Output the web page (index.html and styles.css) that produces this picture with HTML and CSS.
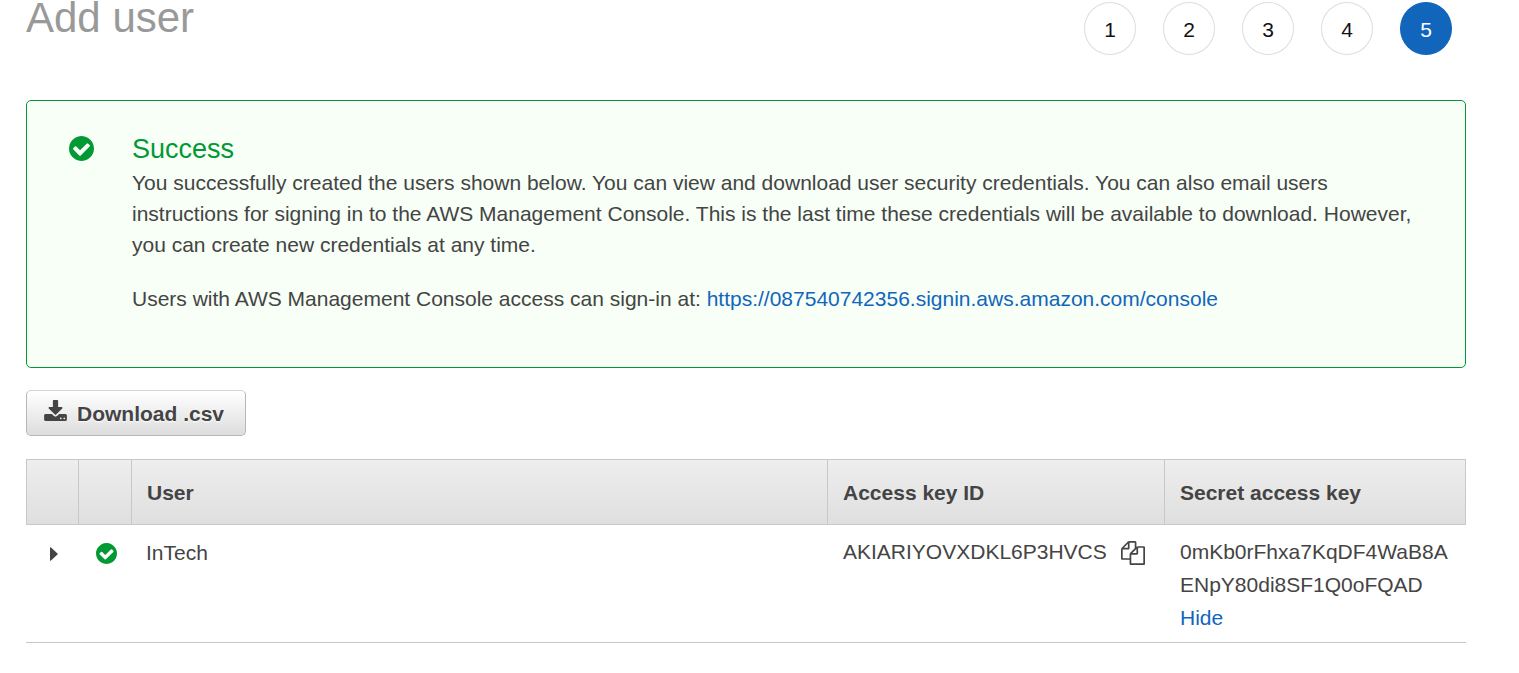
FILE: index.html
```html
<!DOCTYPE html>
<html lang="en">
<head>
<meta charset="utf-8">
<title>Add user</title>
<link rel="stylesheet" href="styles.css">
</head>
<body>
<svg class="sprite" aria-hidden="true">
  <symbol id="check" viewBox="128 128 1536 1536"><path d="M1412 734q0-28-18-46l-91-90q-19-19-45-19t-45 19l-408 407-226-226q-19-19-45-19t-45 19l-91 90q-18 18-18 46 0 27 18 45l362 362q19 19 45 19 27 0 46-19l543-543q18-18 18-45zm252 162q0 209-103 385.500t-279.500 279.500-385.500 103-385.500-103-279.500-279.500-103-385.500 103-385.500 279.500-279.500 385.500-103 385.500 103 279.500 279.500 103 385.500z"/></symbol>
</svg>
<main class="page">
  <header class="head">
    <h1 class="title">Add user</h1>
    <ol class="steps">
      <li class="step">1</li>
      <li class="step">2</li>
      <li class="step">3</li>
      <li class="step">4</li>
      <li class="step step-current" aria-current="step">5</li>
    </ol>
  </header>

  <section class="alert">
    <svg class="alert-icon" aria-hidden="true"><use href="#check"/></svg>
    <div class="alert-body">
      <h2 class="alert-title">Success</h2>
      <p class="alert-text">You successfully created the users shown below. You can view and download user security credentials. You can also email users instructions for signing in to the AWS Management Console. This is the last time these credentials will be available to download. However, you can create new credentials at any time.</p>
      <p class="alert-text">Users with AWS Management Console access can sign-in at: <a class="link" href="https://087540742356.signin.aws.amazon.com/console">https://087540742356.signin.aws.amazon.com/console</a></p>
    </div>
  </section>

  <button class="download" type="button">
    <svg class="download-icon" viewBox="64 0 1664 1536" aria-hidden="true"><path d="M1344 1344q0-26-19-45t-45-19-45 19-19 45 19 45 45 19 45-19 19-45zm256 0q0-26-19-45t-45-19-45 19-19 45 19 45 45 19 45-19 19-45zm128-224v320q0 40-28 68t-68 28h-1472q-40 0-68-28t-28-68v-320q0-40 28-68t68-28h465l135 136q58 56 136 56t136-56l136-136h464q40 0 68 28t28 68zm-325-569q17 41-14 70l-448 448q-18 19-45 19t-45-19l-448-448q-31-29-14-70 17-39 59-39h256v-448q0-26 19-45t45-19h256q26 0 45 19t19 45v448h256q42 0 59 39z"/></svg>
    <span>Download .csv</span>
  </button>

  <table class="users">
    <colgroup><col class="col-toggle"><col class="col-status"><col><col class="col-key"><col class="col-secret"></colgroup>
    <thead>
      <tr><th></th><th></th><th>User</th><th>Access key ID</th><th>Secret access key</th></tr>
    </thead>
    <tbody>
      <tr>
        <td class="center"><button class="icon-button" type="button" aria-label="Expand InTech"><svg class="caret" viewBox="0 0 8 14"><path d="M0 0.500Q0 0 1 0.500L7.500 6.500Q8 7 7.500 7.500L1 13.500Q0 14 0 13.500z"/></svg></button></td>
        <td class="center"><svg class="status-icon" role="img" aria-label="Created"><use href="#check"/></svg></td>
        <td class="name">InTech</td>
        <td><div class="key"><span>AKIARIYOVXDKL6P3HVCS</span><button class="icon-button" type="button" aria-label="Copy access key ID"><svg class="copy-icon" viewBox="0 0 1792 1792"><path d="M1696 384q40 0 68 28t28 68v1216q0 40-28 68t-68 28h-960q-40 0-68-28t-28-68v-288h-544q-40 0-68-28t-28-68v-672q0-40 20-88t48-76l408-408q28-28 76-48t88-20h416q40 0 68 28t28 68v328q68-40 128-40h416zm-544 213l-299 299h299v-299zm-640-384l-299 299h299v-299zm196 647l316-316v-416h-384v416q0 40-28 68t-68 28h-416v640h512v-256q0-40 20-88t48-76zm956 804v-1152h-384v416q0 40-28 68t-68 28h-416v640h896z"/></svg></button></div></td>
        <td>0mKb0rFhxa7KqDF4WaB8A<wbr>ENpY80di8SF1Q0oFQAD<br><a class="link" href="#hide">Hide</a></td>
      </tr>
    </tbody>
  </table>
</main>
</body>
</html>
```
FILE: styles.css
```css
* {
  box-sizing: border-box;
}

body {
  margin: 0;
  background: #fff;
  color: #444;
  font-family: "Liberation Sans", Arial, sans-serif;
  font-size: 21px;
  line-height: 31px;
}

svg {
  display: block;
  fill: currentColor;
}

.sprite {
  position: absolute;
  width: 0;
  height: 0;
}

.page {
  padding: 0 53px 24px 26px;
}

.head {
  display: flex;
  justify-content: space-between;
  align-items: flex-start;
  height: 100px;
  padding-right: 14px;
}

.title {
  margin: 0;
  color: #999;
  font-size: 42px;
  font-weight: 400;
  line-height: 36px;
}

.steps {
  display: flex;
  gap: 27px;
  margin: 0;
  padding: 2px 0 0;
  list-style: none;
}

.step {
  width: 52px;
  height: 53px;
  border: 1px solid #ddd;
  border-radius: 50%;
  color: #111;
  line-height: 53px;
  text-align: center;
}

.step-current {
  border-color: #1166bb;
  background: #1166bb;
  color: #fff;
}

.alert {
  display: flex;
  gap: 38px;
  padding: 32px 42px 53px;
  border: 1px solid #093;
  border-radius: 5px;
  background: #f7fff7;
}

.alert-icon {
  flex: none;
  width: 25px;
  height: 25px;
  margin-top: 3px;
  color: #093;
}

.alert-title {
  margin: 0;
  padding-bottom: 2px;
  color: #093;
  font-size: 27px;
  font-weight: 400;
  line-height: 32px;
}

.alert-text {
  margin: 0;
}

.alert-text + .alert-text {
  margin-top: 23px;
}

.link {
  color: #1166bb;
  text-decoration: none;
}

.download {
  display: flex;
  align-items: center;
  gap: 10px;
  height: 46px;
  margin: 22px 0 23px;
  padding: 0 21px 0 17px;
  border: 1px solid #b7b7b7;
  border-top-color: #d4d4d4;
  border-radius: 5px;
  background: linear-gradient(#fff, #ddd);
  color: #444;
  font: bold 21px/31px "Liberation Sans", Arial, sans-serif;
  text-shadow: 0 1px 2px #fff;
}

.download-icon {
  width: 23px;
  height: 21px;
  margin-bottom: 6px;
}

.users {
  width: 100%;
  border-spacing: 0;
  table-layout: fixed;
}

.col-toggle {
  width: 53px;
}

.col-status {
  width: 53px;
}

.col-key {
  width: 337px;
}

.col-secret {
  width: 301px;
}

.users thead tr {
  background: linear-gradient(#eee, #dfdfdf);
}

.users th {
  height: 66px;
  padding: 0 15px;
  border: solid #c8c8c8;
  border-width: 1px 1px 1px 0;
  text-align: left;
}

.users th:first-child {
  border-left-width: 1px;
}

.users td {
  padding: 10px 15px 8px;
  border-bottom: 1px solid #c8c8c8;
  line-height: 33px;
  vertical-align: top;
}

.users .center {
  padding: 12px 0 0 2px;
}

.users .name {
  padding-top: 11px;
  padding-left: 14px;
}

.center svg {
  margin: 0 auto;
}

.icon-button {
  display: flex;
  align-items: center;
  height: 33px;
  margin: 0 auto;
  padding: 0;
  border: 0;
  background: none;
  color: #444;
}

.caret {
  width: 8px;
  height: 14px;
}

.status-icon {
  width: 21px;
  height: 33px;
  color: #093;
}

.key {
  display: flex;
  align-items: center;
  gap: 14px;
}

.key .icon-button {
  margin: 0;
  padding-top: 2px;
}

.copy-icon {
  width: 24px;
  height: 24px;
}
```
